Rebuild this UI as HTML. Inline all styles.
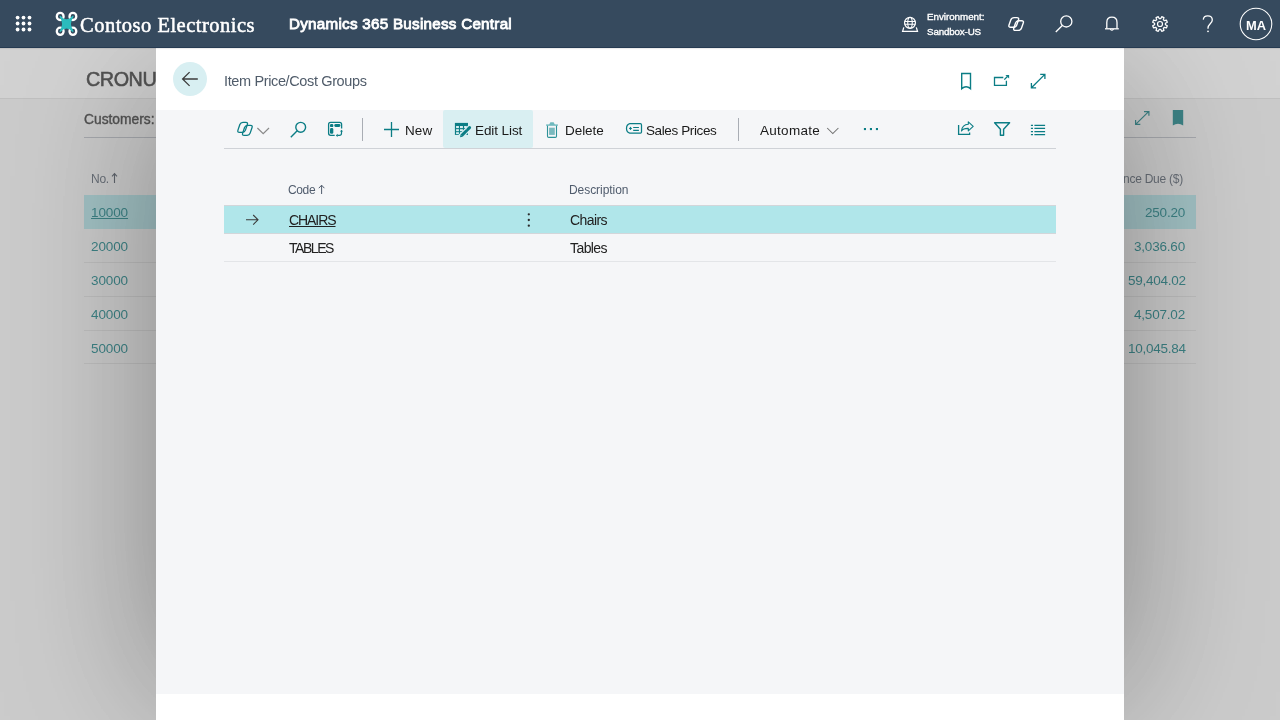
<!DOCTYPE html>
<html><head><meta charset="utf-8">
<style>
*{box-sizing:border-box;margin:0;padding:0}
html,body{width:1280px;height:720px;overflow:hidden;font-family:"Liberation Sans",sans-serif;background:#fff;position:relative}
.L{position:absolute;left:0;top:0;width:1280px;height:720px}
.tx{position:absolute;white-space:nowrap;will-change:transform}
.r{position:absolute}
svg{position:absolute;left:0;top:0;overflow:visible}
</style></head><body>

<!-- background page -->
<div class="L" style="z-index:1">
  <div class="r" style="left:0;top:98px;width:1280px;height:622px;background:#f3f3f3"></div>
  <div class="r" style="left:0;top:98px;width:1280px;height:1px;background:#e1e1e1"></div>
  <div class="r" style="left:84px;top:137px;width:1112px;height:1px;background:#b4b8c0"></div>
  <div class="r" style="left:84px;top:194.5px;width:1112px;height:34px;background:#ade3e8"></div>
  <div class="r" style="left:84px;top:262px;width:1112px;height:1px;background:#dcdcdc"></div>
  <div class="r" style="left:84px;top:296px;width:1112px;height:1px;background:#dcdcdc"></div>
  <div class="r" style="left:84px;top:330px;width:1112px;height:1px;background:#dcdcdc"></div>
  <div class="r" style="left:84px;top:363px;width:1112px;height:1px;background:#dcdcdc"></div>
  <svg width="1280" height="720">
    <g stroke="#00777c" stroke-width="1.2" fill="none">
      <path d="M1135.9 124.1 L1148.6 111.6 M1144 111.6 H1148.9 V115.8 M1135.6 120 V124.4 H1140.3"/>
    </g>
    <path d="M1172.8 110.1 H1183.2 V125.6 Q1178 122 1172.8 125.6 Z" fill="#00777c"/>
    <path d="M114.5 183 V173.8 M112 176.3 L114.5 173.6 L117 176.3" stroke="#3d4654" stroke-width="1.1" fill="none"/>
  </svg>
  <div class="tx" style="left:86.40px;top:70.24px;font-size:19.8px;line-height:19.8px;color:#262626;letter-spacing:-0.45px;-webkit-text-stroke:0.55px #262626;">CRONUS USA, Inc.</div>
<div class="tx" style="left:84.20px;top:113.12px;font-size:13.8px;line-height:13.8px;color:#262626;letter-spacing:0px;-webkit-text-stroke:0.4px #262626;">Customers: All</div>
<div class="tx" style="left:90.50px;top:172.74px;font-size:12px;line-height:12px;color:#4a5564;letter-spacing:-0.291px;">No.</div>
<div class="tx" style="left:1123.30px;top:172.94px;font-size:12px;line-height:12px;color:#4a5564;letter-spacing:-0.245px;">nce Due ($)</div>
<div class="tx" style="left:91.10px;top:205.87px;font-size:13.5px;line-height:13.5px;color:#00777c;letter-spacing:-0.108px;text-decoration:underline;">10000</div>
<div class="tx" style="left:1145.30px;top:205.87px;font-size:13.5px;line-height:13.5px;color:#00777c;letter-spacing:-0.215px;">250.20</div>
<div class="tx" style="left:91.10px;top:239.87px;font-size:13.5px;line-height:13.5px;color:#00777c;letter-spacing:-0.108px;">20000</div>
<div class="tx" style="left:1134.30px;top:239.87px;font-size:13.5px;line-height:13.5px;color:#00777c;letter-spacing:-0.194px;">3,036.60</div>
<div class="tx" style="left:91.10px;top:273.87px;font-size:13.5px;line-height:13.5px;color:#00777c;letter-spacing:-0.108px;">30000</div>
<div class="tx" style="left:1127.50px;top:273.87px;font-size:13.5px;line-height:13.5px;color:#00777c;letter-spacing:-0.251px;">59,404.02</div>
<div class="tx" style="left:91.10px;top:307.87px;font-size:13.5px;line-height:13.5px;color:#00777c;letter-spacing:-0.108px;">40000</div>
<div class="tx" style="left:1134.30px;top:307.87px;font-size:13.5px;line-height:13.5px;color:#00777c;letter-spacing:-0.194px;">4,507.02</div>
<div class="tx" style="left:91.10px;top:341.87px;font-size:13.5px;line-height:13.5px;color:#00777c;letter-spacing:-0.108px;">50000</div>
<div class="tx" style="left:1127.50px;top:341.87px;font-size:13.5px;line-height:13.5px;color:#00777c;letter-spacing:-0.251px;">10,045.84</div>
</div>

<!-- overlay -->
<div class="r" style="left:0;top:48px;width:1280px;height:672px;background:rgba(146,146,146,0.415);z-index:2"></div>

<!-- dialog -->
<div class="r" style="left:156px;top:85px;width:968px;height:607px;background:#fff;box-shadow:0 0 140px rgba(0,0,0,0.35);z-index:3"></div>
<div class="r" style="left:156px;top:48px;width:968px;height:672px;background:#fff;z-index:3"></div>
<div class="L" style="z-index:4">
  <div class="r" style="left:156px;top:110px;width:968px;height:584px;background:#f5f6f8"></div>
  <div class="r" style="left:173px;top:62px;width:34px;height:34px;border-radius:50%;background:#d8eff2"></div>
  <div class="r" style="left:443px;top:110px;width:90px;height:37.5px;background:#d9eff2;border-radius:2px"></div>
  <div class="r" style="left:224px;top:148px;width:832px;height:1px;background:#cfd2d7"></div>
  <div class="r" style="left:362px;top:118px;width:1px;height:23px;background:#a9adb4"></div>
  <div class="r" style="left:738px;top:118px;width:1px;height:23px;background:#a9adb4"></div>
  <div class="r" style="left:224px;top:205px;width:832px;height:1px;background:#d3d6da"></div>
  <div class="r" style="left:224px;top:206px;width:832px;height:27px;background:#b0e6ea"></div>
  <div class="r" style="left:224px;top:233px;width:832px;height:1px;background:#d3d6da"></div>
  <div class="r" style="left:224px;top:261px;width:832px;height:1px;background:#e3e5e8"></div>
  <svg width="1280" height="720">
    <!-- back arrow -->
    <path d="M182.6 79 H197.8 M189.6 72.1 L182.6 79 L189.6 85.9" stroke="#3c3c3c" stroke-width="1.3" fill="none"/>
    <g stroke="#0b7d85" stroke-width="1.4" fill="none">
      <!-- bookmark -->
      <path d="M961.7 73.5 H970.5 V88.6 Q966.1 84.8 961.7 88.6 Z"/>
      <!-- open in new -->
      <path d="M1003.3 77.5 H994.5 V85.4 H1006.4 V80.7 M1004.3 79.6 L1007.4 76.5" stroke-width="1.3"/>
      <path d="M1005.4 74.9 H1009.1 V78.6 Z" fill="#0b7d85" stroke="none"/>
      <!-- expand -->
      <path d="M1031.7 87.5 L1044.6 74.6 M1040.2 74.3 H1044.9 V79 M1031.4 83 V87.8 H1036.1" stroke-width="1.3"/>
      <!-- search -->
      <circle cx="300.7" cy="127.3" r="4.9"/>
      <path d="M297.2 130.8 L290.8 137.2"/>
      <!-- plus -->
      <path d="M384 129.5 H399 M391.5 122 V137" stroke-width="1.3"/>
      <!-- personalize -->
      <path d="M334.7 135.3 H330.6 Q328.6 135.3 328.6 133.3 V124.4 Q328.6 122.4 330.6 122.4 H339.6 Q341.6 122.4 341.6 124.4 V128.6" stroke-width="1.3"/>
      <path d="M341.5 131 V133.3 Q341.5 135.4 339.4 135.4 H337.3" stroke-width="1.2"/>
      <!-- share -->
      <path d="M958.6 125.1 V134.4 H969.6 V132.4" stroke-width="1.3"/>
      <path d="M961.5 131 C962 126.5 964.5 124.4 968.3 124.3 V121.8 L973.2 126.3 L968.3 130.9 V128.4 C965 128.3 962.6 129.2 961.5 131 Z" stroke-width="1.1" stroke-linejoin="round"/>
      <!-- filter -->
      <path d="M994.6 122.8 H1009.6 L1003.6 129.3 V135.2 H1000.4 V129.3 Z" stroke-linejoin="round"/>
      <!-- list -->
      <path d="M1034.4 125.4 H1045.1 M1034.4 128.4 H1045.1 M1034.4 131.5 H1045.1 M1034.4 134.5 H1045.1 M1030.9 125.4 H1033 M1030.9 128.4 H1033 M1030.9 131.5 H1033 M1030.9 134.5 H1033" stroke-width="1.25"/>
      <!-- tag -->
      <path d="M629.8 123.7 H640.3 Q641.5 123.7 641.5 124.9 V131.9 Q641.5 133.1 640.3 133.1 H629.8 Q626.6 132.2 626.5 128.4 Q626.6 124.6 629.8 123.7 Z" stroke-width="1.25"/>
      <path d="M633.2 127.5 H638.9 M633.2 130.4 H638.9" stroke-width="1.15"/>
      <path d="M630.5 126.9 V129.9 M629 128.4 H632" stroke-width="0.9"/>
      <!-- trash -->
      <path d="M547.5 125.2 V136.2 Q547.5 137.4 548.7 137.4 H555.3 Q556.5 137.4 556.5 136.2 V125.2" stroke="#2e9298" stroke-width="1.1"/>
      <path d="M546.1 125.1 H557.9" stroke="#6fb9be" stroke-width="1.4"/>
    </g>
    <g fill="#0b7d85">
      <rect x="330" y="123.9" width="3.3" height="3.2" rx="1.2"/>
      <rect x="334.3" y="123.9" width="6.1" height="3" rx="1.3"/>
      <rect x="330" y="128.1" width="3.3" height="5.6" rx="1.3"/>
      <path d="M339.9 131.5 L341.5 129.7 L343.1 131.5 Z"/>
      <path d="M337.6 133.8 L335.8 135.4 L337.6 137 Z"/>
      <circle cx="530.1" cy="214" r="0"/>
      <rect x="549.1" y="127.7" width="5.7" height="7.2" fill="#7ab9be"/>
      <path d="M549 125 L550.4 122.3 H553.6 L555 125 Z" fill="#6fb9be"/>
      <circle cx="630.5" cy="128.5" r="0.9"/>
      <rect x="863.9" y="128" width="2.1" height="2.1"/>
      <rect x="869.9" y="128" width="2.1" height="2.1"/>
      <rect x="875.9" y="128" width="2.1" height="2.1"/>
    </g>
    <!-- copilot toolbar -->
    <g stroke="#0b7d85" stroke-width="1.3" fill="none" stroke-linejoin="round">
      <path d="M239.85 124.58 Q240.60 122.40 242.90 122.40 L245.80 122.40 Q248.10 122.40 247.35 124.58 L245.45 130.12 Q244.70 132.30 242.40 132.30 L239.50 132.30 Q237.20 132.30 237.95 130.12 Z"/>
      <path d="M244.56 127.48 Q245.30 125.30 247.60 125.30 L250.50 125.30 Q252.80 125.30 252.06 127.48 L250.14 133.12 Q249.40 135.30 247.10 135.30 L244.20 135.30 Q241.90 135.30 242.64 133.12 Z"/>
    </g>
    <path d="M257.4 128 L263.2 133.7 L269 128" stroke="#8a8a8a" stroke-width="1.2" fill="none"/>
    <path d="M827.2 128 L832.8 133.6 L838.4 128" stroke="#707070" stroke-width="1.05" fill="none"/>
    <!-- edit list icon -->
    <rect x="454.9" y="122.9" width="13.1" height="12" fill="#0b7d85"/>
    <g fill="#d9eff2">
      <rect x="456.1" y="126" width="2.8" height="2.1"/><rect x="460" y="126" width="2.9" height="2.1"/><rect x="464.1" y="126" width="2.7" height="2.1"/>
      <rect x="456.1" y="129.2" width="2.8" height="2"/><rect x="460" y="129.2" width="2.9" height="2"/><rect x="464.1" y="129.2" width="2.7" height="2"/>
      <rect x="456.1" y="132.2" width="2.8" height="1.9"/><rect x="460" y="132.2" width="2.9" height="1.9"/><rect x="464.1" y="132.2" width="2.7" height="1.9"/>
    </g>
    <path d="M461 136.2 L469.4 127.8" stroke="#d9eff2" stroke-width="5.4" stroke-linecap="round"/>
    <path d="M461.6 135.6 L467 130.2" stroke="#0b7d85" stroke-width="3" stroke-linecap="butt"/>
    <path d="M467.7 129.5 L469.6 127.6" stroke="#0b7d85" stroke-width="3" stroke-linecap="round"/>
    <path d="M460 137.3 L460.6 134.6 L462.7 136.7 Z" fill="#0b7d85"/>
    <!-- grid -->
    <path d="M321.6 194 V185.3 M318.8 188.2 L321.6 185.2 L324.4 188.2" stroke="#505c6d" stroke-width="1" fill="none"/>
    <path d="M246 219.8 H258 M253.2 215 L258 219.8 L253.2 224.6" stroke="#3a3a3a" stroke-width="1.1" fill="none"/>
    <g fill="#2a2a2a">
      <circle cx="528.8" cy="214.3" r="1.15"/>
      <circle cx="528.8" cy="220" r="1.15"/>
      <circle cx="528.8" cy="225.7" r="1.15"/>
    </g>
  </svg>
  <div class="tx" style="left:224.30px;top:73.83px;font-size:14.5px;line-height:14.5px;color:#505c6a;letter-spacing:-0.368px;">Item Price/Cost Groups</div>
<div class="tx" style="left:404.75px;top:124.07px;font-size:13.5px;line-height:13.5px;color:#1a1a1a;letter-spacing:0.064px;">New</div>
<div class="tx" style="left:474.75px;top:124.07px;font-size:13.5px;line-height:13.5px;color:#1a1a1a;letter-spacing:-0.091px;">Edit List</div>
<div class="tx" style="left:564.70px;top:124.27px;font-size:13.5px;line-height:13.5px;color:#1a1a1a;letter-spacing:-0.054px;">Delete</div>
<div class="tx" style="left:645.90px;top:124.27px;font-size:13.5px;line-height:13.5px;color:#1a1a1a;letter-spacing:-0.386px;">Sales Prices</div>
<div class="tx" style="left:760.25px;top:124.07px;font-size:13.5px;line-height:13.5px;color:#1a1a1a;letter-spacing:0.277px;">Automate</div>
<div class="tx" style="left:287.75px;top:184.19px;font-size:12px;line-height:12px;color:#505c6d;letter-spacing:-0.372px;">Code</div>
<div class="tx" style="left:569.40px;top:184.19px;font-size:12px;line-height:12px;color:#505c6d;letter-spacing:-0.057px;">Description</div>
<div class="tx" style="left:288.75px;top:212.95px;font-size:14px;line-height:14px;color:#212121;letter-spacing:-1.066px;text-decoration:underline;">CHAIRS</div>
<div class="tx" style="left:289.00px;top:240.75px;font-size:14px;line-height:14px;color:#212121;letter-spacing:-1.442px;">TABLES</div>
<div class="tx" style="left:570.25px;top:212.95px;font-size:14px;line-height:14px;color:#212121;letter-spacing:-0.576px;">Chairs</div>
<div class="tx" style="left:570.25px;top:240.75px;font-size:14px;line-height:14px;color:#212121;letter-spacing:-0.578px;">Tables</div>
</div>

<!-- header -->
<div class="r" style="left:0;top:0;width:1280px;height:48px;background:#364a5e;border-bottom:1px solid #253a51;box-shadow:0 1px 1px rgba(0,0,0,0.08);z-index:5">
  <svg width="1280" height="48">
    <g fill="#fff">
      <circle cx="17.6" cy="17.6" r="1.9"/><circle cx="23.5" cy="17.6" r="1.9"/><circle cx="29.5" cy="17.6" r="1.9"/>
      <circle cx="17.6" cy="23.5" r="1.9"/><circle cx="23.5" cy="23.5" r="1.9"/><circle cx="29.5" cy="23.5" r="1.9"/>
      <circle cx="17.6" cy="29.5" r="1.9"/><circle cx="23.5" cy="29.5" r="1.9"/><circle cx="29.5" cy="29.5" r="1.9"/>
    </g>
    <!-- logo -->
    <g stroke="#fff" stroke-width="2.3" fill="none">
      <ellipse cx="60.2" cy="16.4" rx="3.4" ry="3.6"/>
      <ellipse cx="72.9" cy="16.4" rx="3.4" ry="3.6"/>
      <ellipse cx="60.2" cy="31.3" rx="3.4" ry="3.6"/>
      <ellipse cx="72.9" cy="31.3" rx="3.4" ry="3.6"/>
    </g>
    <path d="M60.2 16.4 Q66.5 23.6 72.9 16.4 Q67.6 23.9 72.9 31.3 Q66.5 24.3 60.2 31.3 Q65.4 23.9 60.2 16.4 Z" fill="#2bbcbd" stroke="#2bbcbd" stroke-width="1.4" stroke-linejoin="round"/>
    <g stroke="#fff" stroke-width="1.2" fill="none">
      <!-- globe -->
      <circle cx="910" cy="22.85" r="5.45" stroke-width="1.2"/>
      <ellipse cx="910" cy="22.85" rx="2.25" ry="5.45" stroke-width="1.1"/>
      <path d="M904.6 21.5 H915.4 M904.6 24.3 H915.4" stroke-width="1.1"/>
      <path d="M903.8 27.4 L902.6 31.3 H917.5 L916.3 27.4" stroke-width="1.25"/>
      <!-- copilot -->
      <path d="M1010.77 19.96 Q1011.60 17.60 1014.10 17.60 L1016.80 17.60 Q1019.30 17.60 1018.47 19.96 L1016.73 24.94 Q1015.90 27.30 1013.40 27.30 L1010.70 27.30 Q1008.20 27.30 1009.03 24.94 Z" stroke-width="1.4"/>
      <path d="M1015.57 23.06 Q1016.40 20.70 1018.90 20.70 L1021.60 20.70 Q1024.10 20.70 1023.27 23.06 L1021.53 28.04 Q1020.70 30.40 1018.20 30.40 L1015.50 30.40 Q1013.00 30.40 1013.83 28.04 Z" stroke-width="1.4"/>
      <!-- search -->
      <circle cx="1066.3" cy="21.4" r="5.6" stroke-width="1.3"/>
      <path d="M1062.3 25.5 L1055.8 32" stroke-width="1.3"/>
      <!-- bell -->
      <path d="M1106.8 28.5 V22.5 C1106.8 18.5 1109 17.2 1111.9 17.2 C1114.8 17.2 1117 18.5 1117 22.5 V28.5" stroke-width="1.3"/>
      <path d="M1105 28.8 H1118.8" stroke-width="1.3"/>
      <path d="M1110.3 29 Q1111.9 31.5 1113.5 29" stroke-width="1.2"/>
      <!-- gear -->
      <circle cx="1160" cy="24" r="2.5" stroke-width="1.2"/>
      <!-- avatar -->
      <circle cx="1256" cy="24" r="15.8" stroke-width="1.1"/>
    </g>
    <path d="M1160.78 18.56 L1161.73 16.70 L1163.94 17.62 L1163.30 19.60 L1164.40 20.70 L1166.38 20.06 L1167.30 22.27 L1165.44 23.22 L1165.44 24.78 L1167.30 25.73 L1166.38 27.94 L1164.40 27.30 L1163.30 28.40 L1163.94 30.38 L1161.73 31.30 L1160.78 29.44 L1159.22 29.44 L1158.27 31.30 L1156.06 30.38 L1156.70 28.40 L1155.60 27.30 L1153.62 27.94 L1152.70 25.73 L1154.56 24.78 L1154.56 23.22 L1152.70 22.27 L1153.62 20.06 L1155.60 20.70 L1156.70 19.60 L1156.06 17.62 L1158.27 16.70 L1159.22 18.56 Z" stroke="#fff" stroke-width="1.3" fill="none" stroke-linejoin="round"/>
    <path d="M1203.3 19.6 C1203.5 17 1205.5 15.9 1207.7 15.9 C1210.3 15.9 1212.3 17.5 1212.3 20 C1212.3 23.5 1208 24.2 1208 28 V28.7" stroke="#fff" stroke-width="1.3" fill="none"/>
    <circle cx="1208" cy="31.3" r="0.9" fill="#fff"/>
  </svg>
</div>
<div class="L" style="z-index:6;pointer-events:none">
<div class="tx" style="left:80.00px;top:15.43px;font-size:20.5px;line-height:20.5px;color:#fff;font-family:'Liberation Serif',serif;letter-spacing:0.490px;transform:scaleY(1.04);transform-origin:0 24px;-webkit-text-stroke:0.5px #fff;">Contoso Electronics</div>
<div class="tx" style="left:289.40px;top:16.13px;font-size:15.2px;line-height:15.2px;color:#fff;letter-spacing:0.267px;-webkit-text-stroke:0.85px #fff;">Dynamics 365 Business Central</div>
<div class="tx" style="left:927.30px;top:12.10px;font-size:9.8px;line-height:9.8px;color:#fff;letter-spacing:-0.027px;-webkit-text-stroke:0.35px #fff;">Environment:</div>
<div class="tx" style="left:927.30px;top:27.10px;font-size:9.8px;line-height:9.8px;color:#fff;letter-spacing:-0.155px;-webkit-text-stroke:0.35px #fff;">Sandbox-US</div>
<div class="tx" style="left:1246.30px;top:19.82px;font-size:12.85px;line-height:12.85px;color:#fff;font-weight:bold;letter-spacing:0.013px;">MA</div>
</div>

</body></html>
